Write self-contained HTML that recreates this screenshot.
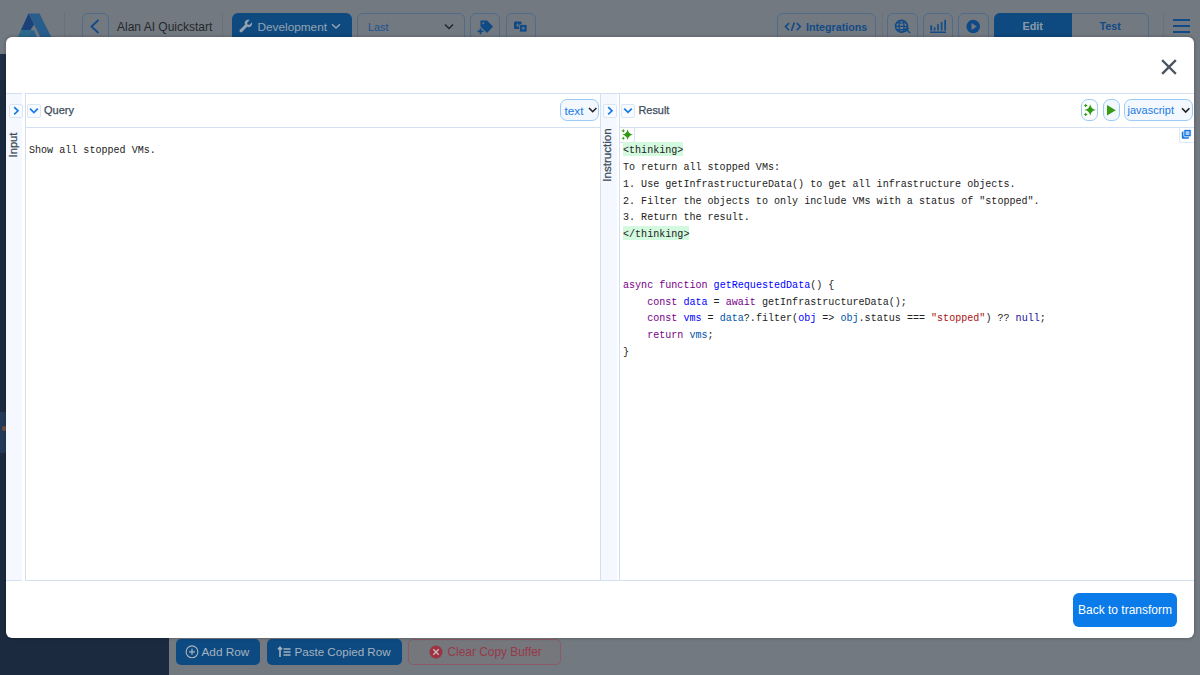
<!DOCTYPE html>
<html><head><meta charset="utf-8">
<style>
*{box-sizing:border-box;margin:0;padding:0}
html,body{width:1200px;height:675px;overflow:hidden}
body{position:relative;background:#737980;font-family:"Liberation Sans",sans-serif}
.abs{position:absolute}
/* background app (pre-darkened) */
#topbar{left:0;top:0;width:1200px;height:54px;background:#737980}
#sidebar{left:0;top:54px;width:169px;height:621px;background:#1b2a3f}
.obtn{position:absolute;border:1px solid #4f6c8b;border-radius:6px;}
.sep{position:absolute;top:11px;width:1px;height:30px;background:#6a7178}
/* modal */
#modal{left:6px;top:37px;width:1188px;height:601px;background:#fff;border-radius:6px;overflow:hidden;box-shadow:0 0 3px 1px rgba(0,0,0,.18)}
.hline{position:absolute;height:1px;background:#d3e0f1}
.vline{position:absolute;width:1px;background:#d3e0f1}
.sq{position:absolute;width:14px;height:14px;border:1px solid #dce6f2;border-radius:2px;background:#f7faff}
.lbl{position:absolute;font-size:11px;color:#3d4c5c;-webkit-text-stroke:0.25px #3d4c5c}
.rot{position:absolute;left:50%;top:50%;transform:translate(-50%,-50%) rotate(-90deg);color:#3d4c5c;-webkit-text-stroke:0.25px #3d4c5c;white-space:nowrap}
.code{position:absolute;font-family:"Liberation Mono",monospace;font-size:10.07px;line-height:16.85px;color:#222;white-space:pre}
.kw{color:#770088}.df{color:#0000ff}.v2{color:#0055aa}.st{color:#aa1111}.at{color:#221199}
.hl{background:#d3f9df;padding:3px 0 0}
.sel{position:absolute;height:22px;border:1px solid #9ccaf6;border-radius:7px;background:#f3f8ff;color:#1b7be3;font-size:12px}
</style></head><body>
<div id="topbar" class="abs"></div>
<div id="sidebar" class="abs"></div>
<div class="abs" style="left:0;top:54px;width:169px;height:26px;background:#1e3046"></div>
<div class="abs" style="left:0;top:412px;width:169px;height:41px;background:#243a58"></div>
<div class="abs" style="left:1.5px;top:425.5px;width:5px;height:5px;border-radius:50%;background:#74503e"></div>
<!-- logo -->
<svg class="abs" style="left:0;top:0" width="60" height="40">
  <polygon points="28.5,13.5 39.5,13.5 51.5,37.5 40.5,37.5" fill="#295d8b"/>
  <polygon points="28.5,13.5 34,24.5 30.5,30 21,30" fill="#1b417a"/>
  <polygon points="21,30 31,30 27.5,37.5 17.5,37.5" fill="#2b6a88"/>
  <polygon points="31,30 34.5,30.5 37,37.5 27.5,37.5" fill="#2a648e"/>
</svg>
<div class="sep" style="left:64px;top:13px;height:26px"></div>
<div class="obtn" style="left:82px;top:13px;width:27px;height:30px"></div>
<svg class="abs" style="left:82px;top:13px" width="27" height="26"><path d="M98.5 20L91.5 26.5L98.5 33" transform="translate(-82,-13)" stroke="#114b87" stroke-width="1.8" fill="none"/></svg>
<div class="abs" style="left:117px;top:20px;font-size:12px;color:#24282d;white-space:nowrap">Alan AI Quickstart</div>
<div class="sep" style="left:222px;top:13px;height:26px"></div>
<div class="abs" style="left:232px;top:13px;width:120px;height:30px;background:#0e4a80;border-radius:6px"></div>
<svg class="abs" style="left:239px;top:19px" width="14" height="14" viewBox="0 0 14 14"><path d="M13 3.3L10.6 5.7L8.4 5.6L8.3 3.4L10.7 1C9 0.3 7 0.9 6.1 2.5C5.6 3.5 5.6 4.7 6 5.7L0.9 10.8C0.3 11.4 0.3 12.3 0.9 12.9C1.5 13.5 2.4 13.5 3 12.9L8.1 7.8C9.1 8.3 10.3 8.3 11.3 7.7C12.9 6.8 13.5 4.9 13 3.3Z" fill="#94a2b0"/></svg>
<div class="abs" style="left:257.5px;top:20px;font-size:11.8px;color:#94a2b0;white-space:nowrap">Development</div>
<svg class="abs" style="left:331px;top:23px" width="10" height="7"><path d="M1 1.2L5 5L9 1.2" stroke="#94a2b0" stroke-width="1.5" fill="none"/></svg>
<div class="obtn" style="left:357px;top:13px;width:108px;height:30px"></div>
<div class="abs" style="left:368px;top:20.5px;font-size:10.8px;color:#1a5190;white-space:nowrap">Last</div>
<svg class="abs" style="left:444px;top:23px" width="10" height="8"><path d="M1 1.5L5 5.5L9 1.5" stroke="#1f2933" stroke-width="1.5" fill="none"/></svg>
<div class="obtn" style="left:470px;top:13px;width:30px;height:30px"></div>
<svg class="abs" style="left:470px;top:13px" width="30" height="26" viewBox="470 13 30 26">
  <path d="M480.5 20.5L487 20.5L493 26.5L487 33L480.5 26.5Z" fill="#0f4a87"/>
  <circle cx="483.3" cy="23.3" r="1" fill="#737980"/>
  <rect x="477.5" y="30.5" width="6" height="1.6" fill="#0f4a87"/>
  <rect x="479.7" y="28.3" width="1.6" height="6" fill="#0f4a87"/>
</svg>
<div class="obtn" style="left:506px;top:13px;width:30px;height:30px"></div>
<svg class="abs" style="left:506px;top:13px" width="30" height="26" viewBox="506 13 30 26">
  <rect x="514" y="21.5" width="7.5" height="7.5" rx="1" fill="#0f4a87"/>
  <rect x="519.5" y="24.5" width="7.5" height="7.5" rx="1" fill="#0f4a87" stroke="#737980" stroke-width="0.8"/>
  <path d="M517.7 23.5v3.5M516 25.2h3.5M523.2 26.5v3.5M521.5 28.2h3.5" stroke="#737980" stroke-width="0.9"/>
</svg>
<div class="obtn" style="left:777px;top:13px;width:99px;height:30px"></div>
<svg class="abs" style="left:784px;top:20px" width="18" height="12"><path d="M5 3L1.5 6.6L5 10.2M12.8 3L16.3 6.6L12.8 10.2M10.3 2.5L7.5 10.7" stroke="#114b87" stroke-width="1.6" fill="none"/></svg>
<div class="abs" style="left:806px;top:20.8px;font-size:10.7px;font-weight:700;color:#114b87;white-space:nowrap">Integrations</div>
<div class="sep" style="left:882px;top:13px;height:26px"></div>
<div class="obtn" style="left:887px;top:13px;width:31px;height:30px"></div>
<svg class="abs" style="left:887px;top:13px" width="31" height="26" viewBox="887 13 31 26">
  <circle cx="901.5" cy="26.3" r="6" fill="none" stroke="#114b87" stroke-width="1.5"/>
  <ellipse cx="901.5" cy="26.3" rx="2.5" ry="6" fill="none" stroke="#114b87" stroke-width="1.3"/>
  <path d="M895.5 26.3h12M896.5 23h10M896.5 29.6h10" stroke="#114b87" stroke-width="1.2"/>
  <path d="M905.5 28.5l4.5 4.5M905.5 28.5v3.5M905.5 28.5h3.5" stroke="#114b87" stroke-width="1.4" fill="none"/>
</svg>
<div class="obtn" style="left:923px;top:13px;width:30px;height:30px"></div>
<svg class="abs" style="left:923px;top:13px" width="30" height="26" viewBox="923 13 30 26">
  <rect x="930" y="31.5" width="16" height="1.5" fill="#114b87"/>
  <rect x="930.3" y="25.5" width="1.8" height="5" fill="#114b87"/>
  <rect x="933.8" y="27.3" width="1.6" height="3.2" fill="#114b87"/>
  <rect x="937.2" y="24" width="1.6" height="6.5" fill="#114b87"/>
  <rect x="940.8" y="22" width="1.6" height="8.5" fill="#114b87"/>
  <rect x="944.3" y="19.8" width="1.7" height="10.7" fill="#114b87"/>
</svg>
<div class="obtn" style="left:958px;top:13px;width:31px;height:30px"></div>
<svg class="abs" style="left:958px;top:13px" width="31" height="26" viewBox="958 13 31 26">
  <circle cx="973.2" cy="26.5" r="6.8" fill="#0f4a87"/>
  <path d="M971.5 23L976.8 26.5L971.5 30Z" fill="#737980"/>
</svg>
<div class="abs" style="left:994px;top:13px;width:155px;height:30px;border:1px solid #4f6c8b;border-radius:6px"></div>
<div class="abs" style="left:994px;top:13px;width:78px;height:30px;background:#0e4a80;border-radius:6px 0 0 6px"></div>
<div class="abs" style="left:1022.5px;top:20.3px;font-size:10.8px;font-weight:700;color:#8c9aa8;white-space:nowrap">Edit</div>
<div class="abs" style="left:1099.5px;top:20.3px;font-size:10.8px;font-weight:700;color:#114b87;white-space:nowrap">Test</div>
<div class="sep" style="left:1163px;top:13px;height:26px"></div>
<div class="abs" style="left:1173px;top:18.7px;width:17px;height:2px;background:#114b87"></div>
<div class="abs" style="left:1173px;top:24.6px;width:17px;height:2px;background:#114b87"></div>
<div class="abs" style="left:1173px;top:30.9px;width:17px;height:2px;background:#114b87"></div>
<!-- bottom buttons -->
<div class="abs" style="left:176px;top:639px;width:84px;height:26px;background:#0d4a82;border-radius:5px"></div>
<svg class="abs" style="left:185px;top:645px" width="14" height="14"><circle cx="7" cy="6.8" r="5.9" fill="none" stroke="#a6b2be" stroke-width="1.15"/><path d="M7 3.8v6M4 6.8h6" stroke="#a6b2be" stroke-width="1.3"/></svg>
<div class="abs" style="left:201.5px;top:645px;font-size:11.8px;color:#a6b2be;white-space:nowrap">Add Row</div>
<div class="abs" style="left:267px;top:639px;width:135px;height:26px;background:#0d4a82;border-radius:5px"></div>
<svg class="abs" style="left:277px;top:645px" width="15" height="14"><path d="M3 12V2.5M1 4.5L3 2.2L5 4.5" stroke="#a6b2be" stroke-width="1.6" fill="none"/><path d="M6.5 4h7M6.5 7h7M6.5 10h7" stroke="#a6b2be" stroke-width="1.5"/></svg>
<div class="abs" style="left:294.5px;top:645px;font-size:11.6px;color:#a6b2be;white-space:nowrap">Paste Copied Row</div>
<div class="abs" style="left:408px;top:639px;width:153px;height:26px;border:1px solid #8b5b68;border-radius:5px;background:#76767d"></div>
<svg class="abs" style="left:429px;top:645px" width="14" height="14"><circle cx="7" cy="7" r="6.5" fill="#9e3241"/><path d="M4.3 4.3L9.7 9.7M9.7 4.3L4.3 9.7" stroke="#c9c0c4" stroke-width="1.25"/></svg>
<div class="abs" style="left:447.5px;top:645.3px;font-size:11.9px;color:#973a48;white-space:nowrap">Clear Copy Buffer</div>

<div id="modal" class="abs">
  <!-- close -->
  <svg class="abs" style="left:1155px;top:22px" width="16" height="16" viewBox="0 0 16 16"><path d="M2 2L14 14M14 2L2 14" stroke="#4b5561" stroke-width="2.4" stroke-linecap="square"/></svg>

  <!-- input column -->
  <div class="abs" style="left:0;top:57px;width:16px;height:486px;background:#f5f9ff"></div>
  <div class="hline" style="left:0;top:56px;width:16px"></div>
  <div class="hline" style="left:0;top:543px;width:16px"></div>
  <!-- instruction column -->
  <div class="abs" style="left:595px;top:57px;width:16px;height:486px;background:#f5f9ff"></div>
  <!-- lines -->
  <div class="hline" style="left:19px;top:56px;width:1169px"></div>
  <div class="hline" style="left:19px;top:90px;width:575px"></div>
  <div class="hline" style="left:613px;top:90px;width:575px"></div>
  <div class="hline" style="left:19px;top:543px;width:1169px"></div>
  <div class="vline" style="left:19px;top:56px;height:488px"></div>
  <div class="vline" style="left:594px;top:56px;height:488px"></div>
  <div class="vline" style="left:613px;top:56px;height:488px"></div>

  <!-- input column toggle -->
  <div class="sq" style="left:3px;top:67px;width:13.5px;height:13.5px"></div>
  <svg class="abs" style="left:3px;top:67px" width="14" height="14"><path d="M5.2 3.2L9 6.8L5.2 10.4" stroke="#1a7be6" stroke-width="1.7" fill="none"/></svg>
  <div class="abs" style="left:-1.5px;top:94px;width:17px;height:28px">
    <div class="rot" style="font-size:11.2px">Input</div>
  </div>

  <!-- query header -->
  <div class="sq" style="left:21px;top:67px;width:13.5px;height:13.5px"></div>
  <svg class="abs" style="left:21px;top:67px" width="14" height="14"><path d="M3 4.6L6.9 8.5L10.8 4.6" stroke="#1a7be6" stroke-width="1.7" fill="none"/></svg>
  <div class="lbl" style="left:38px;top:67px">Query</div>
  <div class="sel" style="left:554px;top:62px;width:39px"><span style="position:absolute;left:3.5px;top:3.6px;font-size:11.8px">text</span>
    <svg class="abs" style="left:27px;top:6px" width="10" height="8"><path d="M1 2L4.7 5.7L8.4 2" stroke="#222" stroke-width="1.6" fill="none"/></svg></div>
  <div class="code" style="left:23px;top:106px">Show all stopped VMs.</div>

  <!-- instruction column toggle -->
  <div class="sq" style="left:597px;top:67px;width:13.5px;height:13.5px"></div>
  <svg class="abs" style="left:597px;top:67px" width="14" height="14"><path d="M5.2 3.2L9 6.8L5.2 10.4" stroke="#1a7be6" stroke-width="1.7" fill="none"/></svg>
  <div class="abs" style="left:591.5px;top:91px;width:17px;height:54px">
    <div class="rot" style="font-size:11.6px">Instruction</div>
  </div>

  <!-- result header -->
  <div class="sq" style="left:615px;top:67px;width:13.5px;height:13.5px"></div>
  <svg class="abs" style="left:615px;top:67px" width="14" height="14"><path d="M3.2 4.6L7 8.4L10.8 4.6" stroke="#1a7be6" stroke-width="1.7" fill="none"/></svg>
  <div class="lbl" style="left:632.5px;top:67px;font-size:10.9px">Result</div>

  <div class="sel" style="left:1075px;top:62px;width:17px;background:#fbfdff"></div>
  <svg class="abs" style="left:1075px;top:62px" width="17" height="22" viewBox="1081 99 17 22">
    <path d="M1090.2 104.3Q1091 109.3 1095.9 110Q1091 110.7 1090.2 115.7Q1089.4 110.7 1084.5 110Q1089.4 109.3 1090.2 104.3Z" fill="#2f9b12"/>
    <path d="M1085.7 103.4Q1086 105.1 1087.7 105.4Q1086 105.7 1085.7 107.4Q1085.4 105.7 1083.7 105.4Q1085.4 105.1 1085.7 103.4Z" fill="#2f9b12"/>
    <path d="M1085.7 112.6Q1086 114.3 1087.7 114.6Q1086 114.9 1085.7 116.6Q1085.4 114.9 1083.7 114.6Q1085.4 114.3 1085.7 112.6Z" fill="#2f9b12"/>
  </svg>
  <div class="sel" style="left:1097px;top:62px;width:17px"></div>
  <svg class="abs" style="left:1097px;top:62px" width="17" height="22" viewBox="1103 99 17 22"><path d="M1107 105L1115.8 110.3L1107 115.6Z" fill="#379b14"/></svg>
  <div class="sel" style="left:1117.5px;top:62px;width:69px"><span style="position:absolute;left:3px;top:4.2px;font-size:11px">javascript</span>
    <svg class="abs" style="left:56px;top:7px" width="10" height="8"><path d="M1 1.2L4.7 5L8.4 1.2" stroke="#222" stroke-width="1.6" fill="none"/></svg></div>

  <!-- sparkle box in result -->
  <div class="abs" style="left:614px;top:91px;width:15px;height:15px;border-right:1px solid #d6e3f3;border-bottom:1px solid #d6e3f3;border-bottom-right-radius:3px;background:#fff"></div>
  <svg class="abs" style="left:613px;top:90px" width="16" height="16" viewBox="619 127 16 16">
    <path d="M627.6 129.3Q628.3 134.1 633 134.7Q628.3 135.3 627.6 140.1Q626.9 135.3 622.2 134.7Q626.9 134.1 627.6 129.3Z" fill="#2f9b12"/>
    <path d="M623.3 129.1Q623.6 130.6 625.1 130.9Q623.6 131.2 623.3 132.7Q623 131.2 621.5 130.9Q623 130.6 623.3 129.1Z" fill="#2f9b12"/>
    <path d="M623.3 136.4Q623.6 137.9 625.1 138.2Q623.6 138.5 623.3 140Q623 138.5 621.5 138.2Q623 137.9 623.3 136.4Z" fill="#2f9b12"/>
  </svg>
  <!-- copy icon box -->
  <div class="abs" style="left:1172.5px;top:91px;width:16px;height:15px;border-left:1px solid #dce8f5;border-bottom:1px solid #dce8f5;border-bottom-left-radius:3px;background:#fff"></div>
  <svg class="abs" style="left:1172px;top:90px" width="16" height="16" viewBox="1178 127 16 16">
    <rect x="1181.8" y="131.5" width="7.2" height="7.2" rx="1" fill="#1777e0"/>
    <rect x="1183.8" y="129.4" width="7.4" height="7.4" rx="1" fill="#1777e0" stroke="#fff" stroke-width="0.8"/>
    <rect x="1185.6" y="131.2" width="3.8" height="3.8" fill="#a9cdf5"/>
  </svg>

  <div class="code" style="left:617px;top:106px"><span class="hl">&lt;thinking&gt;</span>
To return all stopped VMs:
1. Use getInfrastructureData() to get all infrastructure objects.
2. Filter the objects to only include VMs with a status of "stopped".
3. Return the result.
<span class="hl">&lt;/thinking&gt;</span>


<span class="kw">async</span> <span class="kw">function</span> <span class="df">getRequestedData</span>() {
    <span class="kw">const</span> <span class="df">data</span> = <span class="kw">await</span> getInfrastructureData();
    <span class="kw">const</span> <span class="df">vms</span> = <span class="v2">data</span>?.filter(<span class="df">obj</span> =&gt; <span class="v2">obj</span>.status === <span class="st">"stopped"</span>) ?? <span class="at">null</span>;
    <span class="kw">return</span> <span class="v2">vms</span>;
}</div>

  <!-- footer button -->
  <div class="abs" style="left:1067px;top:556px;width:104px;height:33.6px;background:#0a7be9;border-radius:6px;color:#fff;font-size:12px;text-align:center;line-height:35.5px">Back to transform</div>
</div>
</body></html>
